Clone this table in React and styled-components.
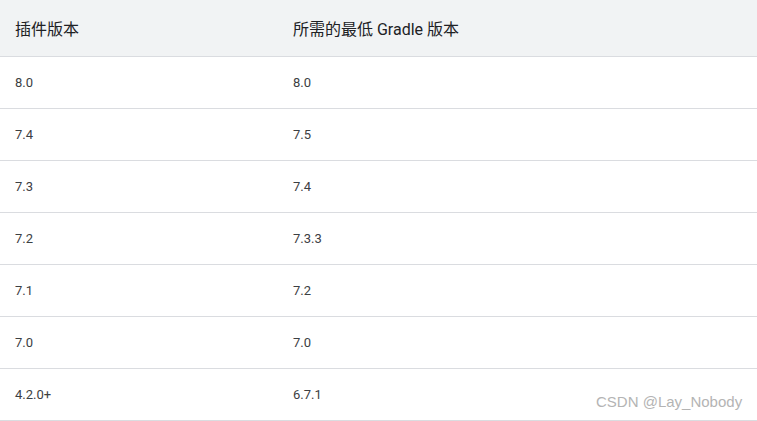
import React from "react";
import styled, { createGlobalStyle } from "styled-components";

const Global = createGlobalStyle`
  html, body { margin: 0; padding: 0; background: #fff; }
  body { font-family: Roboto, "Noto Sans CJK SC", sans-serif; }
`;

const Page = styled.div`
  position: relative;
  width: 757px;
  height: 421px;
  overflow: hidden;
`;

const Table = styled.table`
  width: 757px;
  border-collapse: collapse;
  table-layout: fixed;
`;

const HeadCell = styled.th`
  box-sizing: border-box;
  height: 56px;
  padding: 0 0 0 15px;
  background: #f1f3f4;
  border-bottom: 1px solid #dadce0;
  text-align: left;
  font-family: Roboto, "Noto Sans CJK SC", sans-serif;
  font-size: 16px;
  font-weight: 400;
  color: #202124;
  width: ${(p) => p.$w || "auto"};
`;

const Cell = styled.td`
  height: 51px;
  padding: 0 0 0 15px;
  border-bottom: 1px solid #dadce0;
  font-family: Roboto, "Noto Sans CJK SC", sans-serif;
  font-size: 13px;
  color: #3c4043;
  vertical-align: middle;
`;

const Watermark = styled.div`
  position: absolute;
  left: 596px;
  top: 393px;
  font-family: "Liberation Sans", Arial, sans-serif;
  font-size: 15px;
  color: #b4b4b4;
  white-space: nowrap;
`;

const rows = [
  ["8.0", "8.0"],
  ["7.4", "7.5"],
  ["7.3", "7.4"],
  ["7.2", "7.3.3"],
  ["7.1", "7.2"],
  ["7.0", "7.0"],
  ["4.2.0+", "6.7.1"],
];

export default function App() {
  return (
    <Page>
      <Global />
      <Table>
        <thead>
          <tr>
            <HeadCell $w="278px">插件版本</HeadCell>
            <HeadCell>所需的最低 Gradle 版本</HeadCell>
          </tr>
        </thead>
        <tbody>
          {rows.map(([a, b]) => (
            <tr key={a}>
              <Cell>{a}</Cell>
              <Cell>{b}</Cell>
            </tr>
          ))}
        </tbody>
      </Table>
      <Watermark>CSDN @Lay_Nobody</Watermark>
    </Page>
  );
}
